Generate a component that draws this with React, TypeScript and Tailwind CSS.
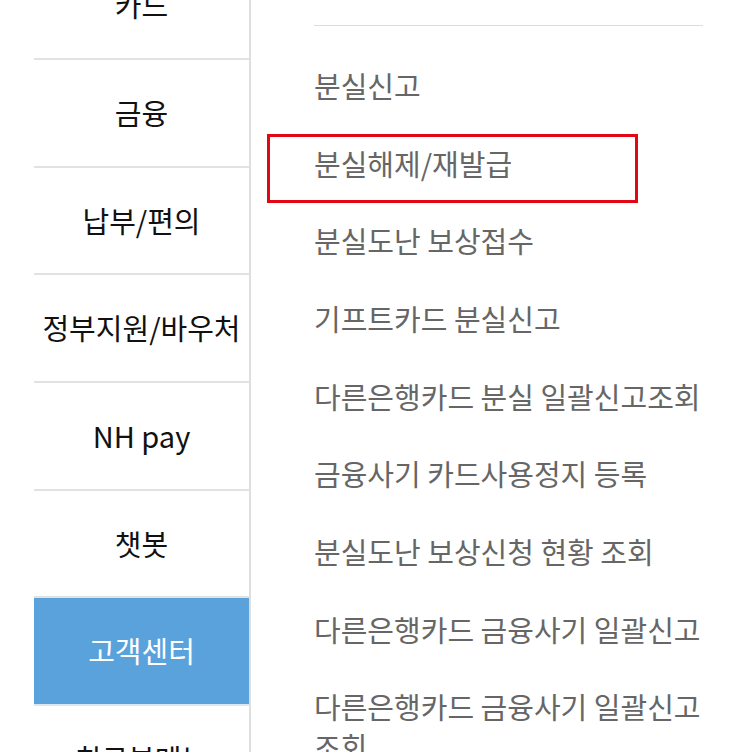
import React from "react";

const leftItems = [
  "카드",
  "금융",
  "납부/편의",
  "정부지원/바우처",
  "NH pay",
  "챗봇",
  "고객센터",
  "최근본메뉴",
];

const rightItems = [
  "분실신고",
  "분실해제/재발급",
  "분실도난 보상접수",
  "기프트카드 분실신고",
  "다른은행카드 분실 일괄신고조회",
  "금융사기 카드사용정지 등록",
  "분실도난 보상신청 현황 조회",
  "다른은행카드 금융사기 일괄신고",
  "다른은행카드 금융사기 일괄신고 조회",
];

export default function App() {
  return (
    <div
      className="relative flex w-[744px] h-[752px] overflow-hidden bg-white"
      style={{ fontFamily: '"Noto Sans CJK KR", "Noto Sans", sans-serif' }}
    >
      <div className="ml-[34px] w-[217px] shrink-0 border-r-2 border-[#dedede]">
        <div className="mt-[-47.67px] flex flex-col">
          {leftItems.map((t) => {
            const active = t === "고객센터";
            return (
              <div
                key={t}
                className={
                  active
                    ? "flex h-[107.67px] items-center justify-center border-b-2 border-[#dbe8f2] bg-[#5aa2dc] text-[29px] font-normal text-white"
                    : "flex h-[107.67px] items-center justify-center border-b-2 border-[#e2e2e2] text-[29px] font-normal text-[#111]"
                }
              >
                <span className="whitespace-nowrap">{t}</span>
              </div>
            );
          })}
        </div>
      </div>
      <div className="flex-1 pl-[63px] pt-[25px]">
        <div className="h-px w-[389px] bg-[#dddddd]" />
        <ul className="w-[410px] pt-[20px]">
          {rightItems.map((t) => (
            <li
              key={t}
              className="py-[18.85px] text-[29px] leading-[40px] text-[#666666] [word-break:keep-all]"
            >
              {t}
            </li>
          ))}
        </ul>
      </div>
      <div className="absolute left-[267px] top-[134px] h-[69px] w-[371px] border-[3px] border-[#e30613]" />
    </div>
  );
}
